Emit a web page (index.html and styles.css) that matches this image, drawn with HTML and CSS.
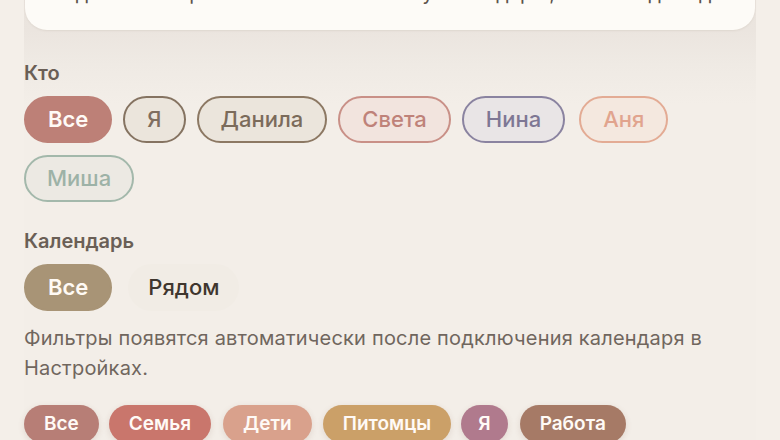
FILE: index.html
```html
<!DOCTYPE html>
<html lang="ru">
<head>
<meta charset="utf-8">
<title>Фильтры</title>
<link rel="stylesheet" href="styles.css">
</head>
<body>
<div class="panel">
  <div class="card">
    <p class="card-text">Подключите приложение к семейному календарю, чтобы видеть дела прямо здесь</p>
  </div>

  <section class="group">
    <h3 class="label">Кто</h3>
    <div class="chips">
      <span class="chip chip-all">Все</span>
      <span class="chip chip-me">Я</span>
      <span class="chip chip-danila">Данила</span>
      <span class="chip chip-sveta">Света</span>
      <span class="chip chip-nina">Нина</span>
      <span class="chip chip-anya">Аня</span>
      <span class="chip chip-misha">Миша</span>
    </div>
  </section>

  <section class="group group-cal">
    <h3 class="label">Календарь</h3>
    <div class="chips">
      <span class="chip chip-cal-all">Все</span>
      <span class="chip chip-near">Рядом</span>
    </div>
    <p class="hint">Фильтры появятся автоматически после подключения календаря в Настройках.</p>
    <div class="tags">
      <span class="tag tag-all">Все</span>
      <span class="tag tag-family">Семья</span>
      <span class="tag tag-kids">Дети</span>
      <span class="tag tag-pets">Питомцы</span>
      <span class="tag tag-me">Я</span>
      <span class="tag tag-work">Работа</span>
    </div>
  </section>
</div>
</body>
</html>
```

FILE: styles.css
```css
* { box-sizing: border-box; }

html, body {
  margin: 0;
  padding: 0;
  background: #f4efe9;
  font-family: Inter, "Noto Sans", "Liberation Sans", sans-serif;
  overflow: hidden;
}

.panel {
  width: 732px;
  margin: -36px 0 0 24px;
  background: linear-gradient(to bottom, #e8e2db 0px, #ebe5df 66px, #efeae4 100px, #f3eee8 140px, #f3eee8 100%);
}

.card {
  margin: 0 1px;
  background: #fdfbf7;
  border-radius: 0 0 22px 22px;
  padding: 15px 24px 23px;
  box-shadow: 0 1px 2px rgba(120, 100, 80, 0.10);
}

.card-text {
  margin: 0;
  font-size: 20px;
  line-height: 28px;
  color: #5c534b;
  white-space: nowrap;
  overflow: hidden;
}

.label {
  margin: 30px 0 10px;
  font-size: 20px;
  line-height: 26px;
  font-weight: 600;
  color: #6a5f56;
}

.group-cal .label { margin-top: 26px; }

.chips {
  display: flex;
  flex-wrap: wrap;
  gap: 12px 11px;
}

.chip {
  display: inline-flex;
  align-items: center;
  height: 47px;
  padding: 0 22px;
  border: 2px solid transparent;
  border-radius: 999px;
  font-size: 22px;
  line-height: 27px;
  font-weight: 500;
}

.chip-all { background: #bd8077; border-color: #bd8077; color: #fffaf6; font-weight: 600; }
.chip-me { background: #ebe5dc; border-color: #857361; color: #7f6e5f; }
.chip-danila { background: #ebe5dc; border-color: #8c7863; color: #7b6b5b; }
.chip-sveta { background: #f2e4de; border-color: #c99087; color: #bf8279; }
.chip-nina { background: #e9e5e6; border-color: #8a83a0; color: #7e7794; }
.chip-anya { background: #f4e8df; border-color: #e3ab94; color: #e1a48e; margin-left: 3px; }
.chip-misha { background: #ece9e3; border-color: #a3b8ab; color: #9db2a7; padding: 0 21px; }

.chip-cal-all { background: #a89476; border-color: #a89476; color: #fffaf4; font-weight: 600; }
.chip-near { background: #f1ece5; color: #3f362e; margin-left: 5px; padding: 0 18px; }

.hint {
  margin: 12px 0 22px;
  font-size: 20px;
  line-height: 30px;
  letter-spacing: 0.2px;
  color: #70665e;
}

.tags {
  display: flex;
  flex-wrap: wrap;
  gap: 10px;
}

.tag {
  display: inline-flex;
  align-items: center;
  height: 38px;
  padding: 0 20px;
  border-radius: 999px;
  font-size: 19px;
  line-height: 24px;
  font-weight: 600;
  color: #fffaf6;
  box-shadow: 0 2px 6px rgba(120, 80, 60, 0.14);
}

.tag-all { background: #b77e76; }
.tag-family { background: #c9766c; }
.tag-kids { background: #d9a18c; margin-left: 2px; }
.tag-pets { background: #cba068; margin-left: 1px; }
.tag-me { background: #b07a8d; padding: 0 17px; }
.tag-work { background: #a67a66; margin-left: 2px; }
```
